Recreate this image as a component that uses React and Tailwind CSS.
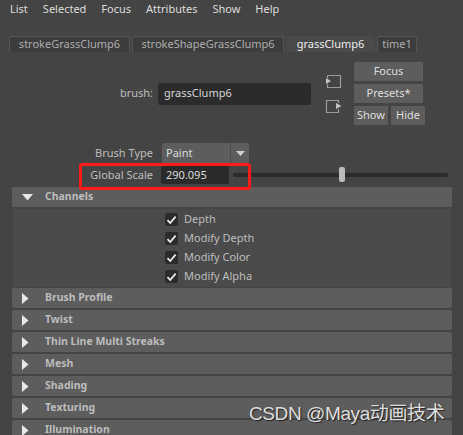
import React from 'react';

const font = { fontFamily: '"Noto Sans", "Open Sans", sans-serif' };

function TriDown() {
  return (
    <svg width="11" height="7" viewBox="0 0 11 7" className="shrink-0">
      <path d="M0 0 L11 0 L5.5 6.5 Z" fill="#e8e8e8" />
    </svg>
  );
}

function TriRight() {
  return (
    <svg width="7" height="11" viewBox="0 0 7 11" className="shrink-0">
      <path d="M0 0 L6.5 5.5 L0 11 Z" fill="#e8e8e8" />
    </svg>
  );
}

function Check() {
  return (
    <span className="flex h-[13px] w-[13px] items-center justify-center rounded-[2px] bg-[#2b2b2b]">
      <svg width="11" height="10" viewBox="0 0 11 10">
        <path d="M1.5 5.2 L4.2 8 L9.6 1.6" stroke="#ededed" strokeWidth="1.8" fill="none" />
      </svg>
    </span>
  );
}

function Section({ title, open }) {
  return (
    <div className="flex h-[20px] items-center rounded-[2px] bg-[#5d5d5d] pl-[10px]">
      <div className="flex w-[23px] items-center">{open ? <TriDown /> : <TriRight />}</div>
      <span className="text-[10.5px] font-bold text-[#bcbcbc]">{title}</span>
    </div>
  );
}

function Btn({ children, w }) {
  return (
    <div className={`flex h-[19px] items-center justify-center rounded-[1px] bg-[#5d5d5d] text-[11px] text-[#dedede] ${w}`}>
      {children}
    </div>
  );
}

export default function App() {
  const menus = ['List', 'Selected', 'Focus', 'Attributes', 'Show', 'Help'];
  const tabs = [
    { name: 'strokeGrassClump6', w: 'w-[121px]' },
    { name: 'strokeShapeGrassClump6', w: 'w-[152px]' },
    { name: 'grassClump6', w: 'w-[89px]', active: true },
    { name: 'time1', w: 'w-[40px]' },
  ];
  const checks = ['Depth', 'Modify Depth', 'Modify Color', 'Modify Alpha'];
  const closed = ['Brush Profile', 'Twist', 'Thin Line Multi Streaks', 'Mesh', 'Shading', 'Texturing', 'Illumination'];

  return (
    <div className="relative h-[435px] w-[463px] overflow-hidden bg-[#444444]" style={font}>
      {/* menu bar */}
      <div className="flex h-[19px] items-center gap-[15px] pl-[10px] text-[11px] text-[#dcdcdc]">
        {menus.map((m) => (
          <span key={m}>{m}</span>
        ))}
      </div>

      {/* tabs */}
      <div className="mt-[17px] flex h-[16px] items-end gap-[2px] pl-[9px]">
        {tabs.map((t) => (
          <div
            key={t.name}
            className={`flex h-[16px] items-center justify-center rounded-t-[3px] border border-b-0 text-[11px] ${t.w} ${
              t.active ? 'border-[#4a4a4a] bg-[#4a4a4a] text-[#ececec]' : 'border-[#555555] bg-[#3c3c3c] text-[#acacac]'
            }`}
          >
            {t.name}
          </div>
        ))}
      </div>

      {/* brush row */}
      <div className="flex items-center pt-[10px]">
        <span className="w-[153px] text-right text-[11px] text-[#bdbdbd]">brush:</span>
        <div className="ml-[5px] flex h-[22px] w-[153px] items-center rounded-[2px] bg-[#2b2b2b] pl-[6px] text-[11px] text-[#d6d6d6]">
          grassClump6
        </div>
        <div className="ml-[14px] flex flex-col gap-[10px]">
          <svg width="17" height="15" viewBox="0 0 17 15">
            <path d="M2.5 1.5 H15.5 V13.5 H2.5 V10" stroke="#9a9a9a" strokeWidth="1.2" fill="none" />
            <path d="M2.5 1.5 V4" stroke="#9a9a9a" strokeWidth="1.2" fill="none" />
            <path d="M1 4 L6 7 L1 10 Z" fill="#c4c4c4" />
          </svg>
          <svg width="17" height="15" viewBox="0 0 17 15">
            <path d="M13.5 4 V1.5 H1.5 V13.5 H13.5 V10" stroke="#9a9a9a" strokeWidth="1.2" fill="none" />
            <path d="M11 4 L16.5 7 L11 10 Z" fill="#c4c4c4" />
          </svg>
        </div>
        <div className="ml-[12px] flex flex-col gap-[3px]">
          <Btn w="w-[69px]">Focus</Btn>
          <Btn w="w-[69px]">Presets*</Btn>
          <div className="flex gap-[3px]">
            <Btn w="w-[34px]">Show</Btn>
            <Btn w="w-[34px]">Hide</Btn>
          </div>
        </div>
      </div>

      {/* brush type / global scale */}
      <div className="mt-[18px] flex items-center">
        <span className="w-[153px] text-right text-[11px] text-[#bdbdbd]">Brush Type</span>
        <div className="ml-[9px] flex h-[20px] w-[87px] rounded-[2px] bg-[#5d5d5d]">
          <span className="flex flex-1 items-center pl-[4px] text-[11px] text-[#dcdcdc]">Paint</span>
          <div className="flex w-[19px] items-center justify-center border-l border-[#4e4e4e]">
            <svg width="9" height="5" viewBox="0 0 9 5">
              <path d="M0 0 H9 L4.5 5 Z" fill="#cfcfcf" />
            </svg>
          </div>
        </div>
      </div>
      <div className="mt-[3px] flex h-[18px] items-center">
        <span className="w-[153px] text-right text-[11px] text-[#bdbdbd]">Global Scale</span>
        <div className="ml-[8px] flex h-[18px] w-[68px] items-center rounded-[2px] bg-[#2b2b2b] pl-[5px] text-[11px] text-[#dcdcdc]">
          290.095
        </div>
        <div className="relative ml-[4px] flex h-[16px] w-[215px] items-center">
          <div className="h-[4px] w-full rounded-full bg-[#2b2b2b]" />
          <div className="absolute left-[106px] top-[0px] h-[15px] w-[6px] rounded-[2px] bg-[#bcbcbc]" />
        </div>
      </div>

      {/* annotation box */}
      <div className="absolute left-[79px] top-[163px] h-[27px] w-[172px] rounded-[3px] border-[3px] border-[#ff1a1a]" />

      {/* sections */}
      <div className="mt-[3px] flex flex-col pl-[12px] pr-[11px]">
        <Section title="Channels" open />
        <div className="mx-[1px] mt-[2px] flex flex-col bg-[#4a4a4a] pb-[1px] pt-[1px]">
          {checks.map((c) => (
            <div key={c} className="flex h-[19px] items-center gap-[6px] pl-[152px]">
              <Check />
              <span className="text-[11px] text-[#bdbdbd]">{c}</span>
            </div>
          ))}
        </div>
        <div className="mt-[1px] flex flex-col gap-[2px]">
          {closed.map((s) => (
            <Section key={s} title={s} />
          ))}
        </div>
      </div>

      {/* watermark */}
      <div
        className="absolute left-[249px] top-[402px] whitespace-nowrap text-[19px] leading-[24px] tracking-[-0.4px] text-[#dedede]"
        style={{ fontFamily: '"Liberation Sans", "Noto Sans CJK SC", sans-serif', textShadow: '1px 1px 1px #222' }}
      >
        CSDN @Maya动画技术
      </div>
    </div>
  );
}
